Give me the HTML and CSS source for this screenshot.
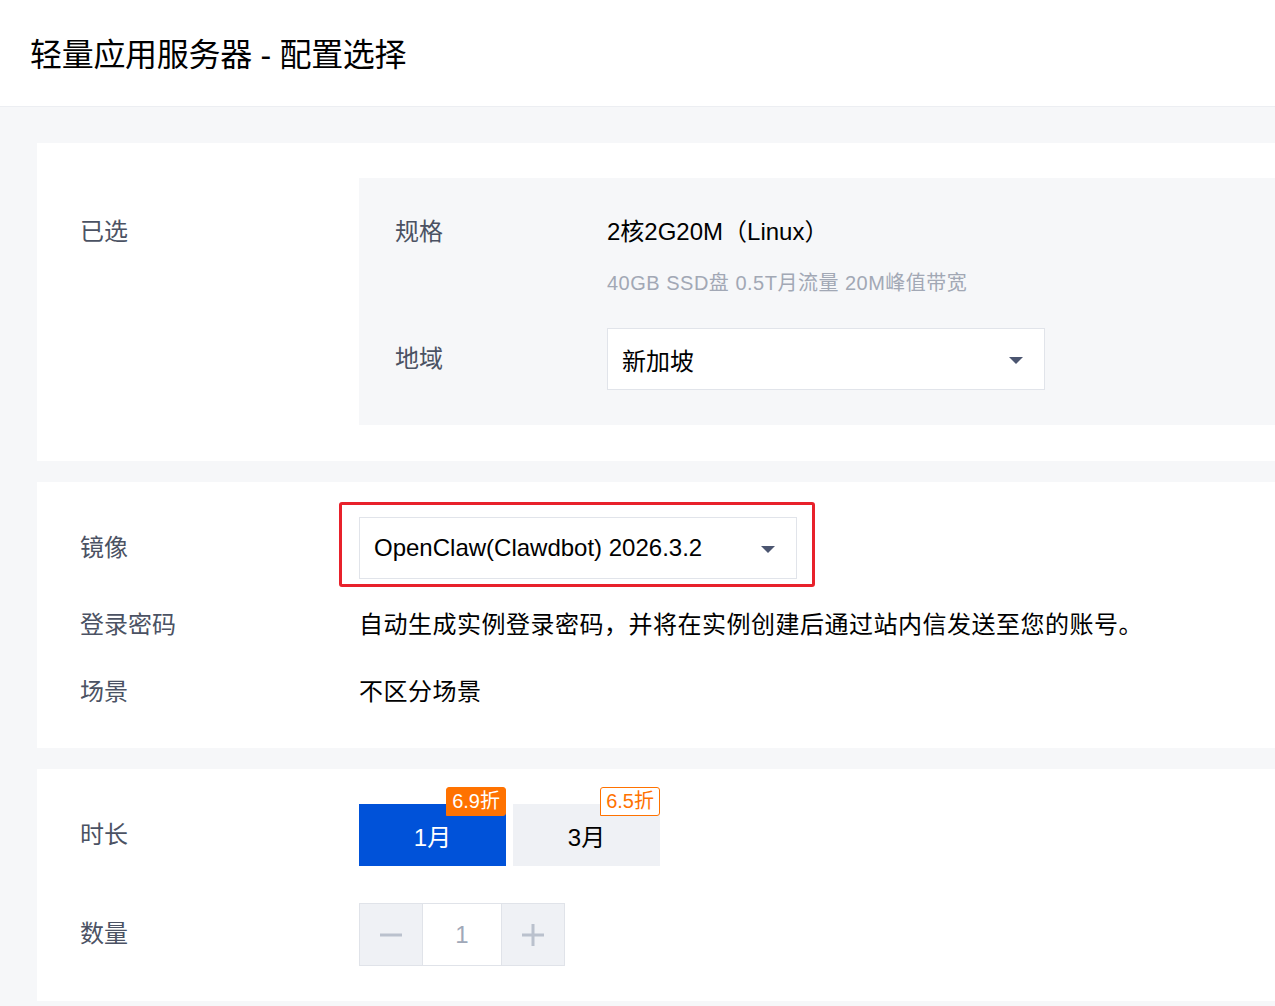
FILE: index.html
```html
<!DOCTYPE html>
<html lang="zh-CN">
<head>
  <meta charset="UTF-8">
  <meta name="viewport" content="width=device-width, initial-scale=1.0">
  <title>轻量应用服务器 - 配置选择</title>
  <link rel="stylesheet" href="styles.css">
</head>
<body>
  <header class="topbar">
    <h1>轻量应用服务器 - 配置选择</h1>
  </header>

  <div id="main">
    <section class="card card-selected">
      <div class="label first">已选</div>
      <div class="summary">
        <div class="sub-label">规格</div>
        <div class="spec">
          <div class="spec-name">2核2G20M（Linux）</div>
          <div class="spec-desc">40GB SSD盘 0.5T月流量 20M峰值带宽</div>
        </div>
        <div class="sub-label region-label">地域</div>
        <div class="select region">
          <span>新加坡</span>
          <i class="caret"></i>
        </div>
      </div>
    </section>

    <section class="card card-image">
      <div class="label row-select">镜像</div>
      <div class="marked">
        <div class="select image">
          <span>OpenClaw(Clawdbot) 2026.3.2</span>
          <i class="caret"></i>
        </div>
      </div>
      <div class="label">登录密码</div>
      <div class="value">自动生成实例登录密码，并将在实例创建后通过站内信发送至您的账号。</div>
      <div class="label last-row">场景</div>
      <div class="value last-row">不区分场景</div>
    </section>

    <section class="card card-buy">
      <div class="label row-select">时长</div>
      <div class="periods">
        <div class="period active">1月<span class="badge filled">6.9折</span></div>
        <div class="period">3月<span class="badge outline">6.5折</span></div>
      </div>
      <div class="label row-select">数量</div>
      <div class="stepper">
        <button class="step minus" type="button">
          <svg width="24" height="24" viewBox="0 0 24 24"><path d="M1 12h22" stroke="currentColor" stroke-width="3"/></svg>
        </button>
        <div class="count">1</div>
        <button class="step plus" type="button">
          <svg width="24" height="24" viewBox="0 0 24 24"><path d="M1 12h22M12 1v22" stroke="currentColor" stroke-width="3"/></svg>
        </button>
      </div>
    </section>
  </div>
</body>
</html>
```

FILE: styles.css
```css
html, body {
  margin: 0;
  padding: 0;
}

body {
  font-family: "Liberation Sans", "Noto Sans CJK SC", sans-serif;
  background-color: #f6f7f9;
  color: #000;
  overflow: hidden;
  height: 1006px;
}

.topbar {
  background-color: #fff;
  height: 106px;
  border-bottom: 1px solid #eceef2;
  display: flex;
  align-items: center;
  padding-left: 30px;
}
.topbar h1 {
  margin: 0;
  font-size: 32px;
  font-weight: normal;
  line-height: 40px;
  padding-top: 4px;
  letter-spacing: -0.3px;
}

#main {
  padding: 36px 0 0 37px;
  display: flex;
  flex-direction: column;
  gap: 21px;
}

.card {
  background-color: #fff;
  display: grid;
  grid-template-columns: 279px 1fr;
  align-items: start;
  padding-left: 43px;
}

.label {
  font-size: 24px;
  line-height: 36px;
  color: #4b5263;
}
.label.first {
  margin-top: 36px;
}
.label.row-select {
  line-height: 62px;
}

/* selected config */
.card-selected {
  padding-top: 35px;
  padding-bottom: 36px;
}
.summary {
  background-color: #f6f7f9;
  display: grid;
  grid-template-columns: 212px 1fr;
  align-items: start;
  padding: 36px 36px 35px;
}
.sub-label {
  font-size: 24px;
  line-height: 36px;
  color: #4b5263;
}
.region-label {
  line-height: 62px;
  margin-top: 31px;
}
.spec-name {
  font-size: 24px;
  line-height: 36px;
}
.spec-desc {
  margin-top: 19px;
  font-size: 20px;
  line-height: 28px;
  color: #a2a8b5;
  letter-spacing: 0.5px;
}

.select {
  box-sizing: border-box;
  height: 62px;
  width: 438px;
  background-color: #fff;
  border: 1px solid #e1e4ea;
  display: flex;
  align-items: center;
  justify-content: space-between;
  padding: 0 21px 0 14px;
  font-size: 24px;
}
.select.region {
  margin-top: 31px;
}
.caret {
  width: 0;
  height: 0;
  border-left: 7px solid transparent;
  border-right: 7px solid transparent;
  border-top: 7px solid #4b5570;
  margin-top: 2px;
}

/* image */
.card-image {
  padding-top: 35px;
  padding-bottom: 38px;
  row-gap: 28px;
}
.marked {
  position: relative;
  width: 438px;
}
.marked::after {
  content: "";
  position: absolute;
  left: -20px;
  top: -15px;
  width: 476px;
  height: 85px;
  box-sizing: border-box;
  border: 3px solid #e8212b;
  border-radius: 3px;
}
.value {
  font-size: 24px;
  line-height: 36px;
  letter-spacing: 0.5px;
}
.card-image .last-row {
  margin-top: 3px;
}

/* buy */
.card-buy {
  padding-top: 35px;
  padding-bottom: 35px;
  row-gap: 37px;
}
.periods {
  display: flex;
  gap: 7px;
}
.period {
  position: relative;
  width: 147px;
  height: 62px;
  background-color: #eff1f5;
  display: flex;
  align-items: center;
  justify-content: center;
  font-size: 24px;
}
.period.active {
  background-color: #0052d9;
  color: #fff;
}
.badge {
  position: absolute;
  right: 0;
  top: -17px;
  box-sizing: border-box;
  height: 29px;
  padding: 0 5px;
  font-size: 20px;
  line-height: 27px;
  border: 1px solid #ff7200;
  border-radius: 3px 3px 3px 0;
}
.badge.filled {
  background-color: #ff7200;
  color: #fff;
}
.badge.outline {
  background-color: #fff;
  color: #ff7200;
}

.stepper {
  display: flex;
  height: 63px;
  width: 206px;
  box-sizing: border-box;
  border: 1px solid #e0e3e9;
}
.step {
  width: 62px;
  border: none;
  background-color: #eff1f5;
  color: #bac1cd;
  display: flex;
  align-items: center;
  justify-content: center;
  padding: 0;
}
.count {
  width: 80px;
  box-sizing: border-box;
  border-left: 1px solid #e0e3e9;
  border-right: 1px solid #e0e3e9;
  background-color: #fff;
  display: flex;
  align-items: center;
  justify-content: center;
  font-size: 24px;
  color: #a0a8b8;
}
```
